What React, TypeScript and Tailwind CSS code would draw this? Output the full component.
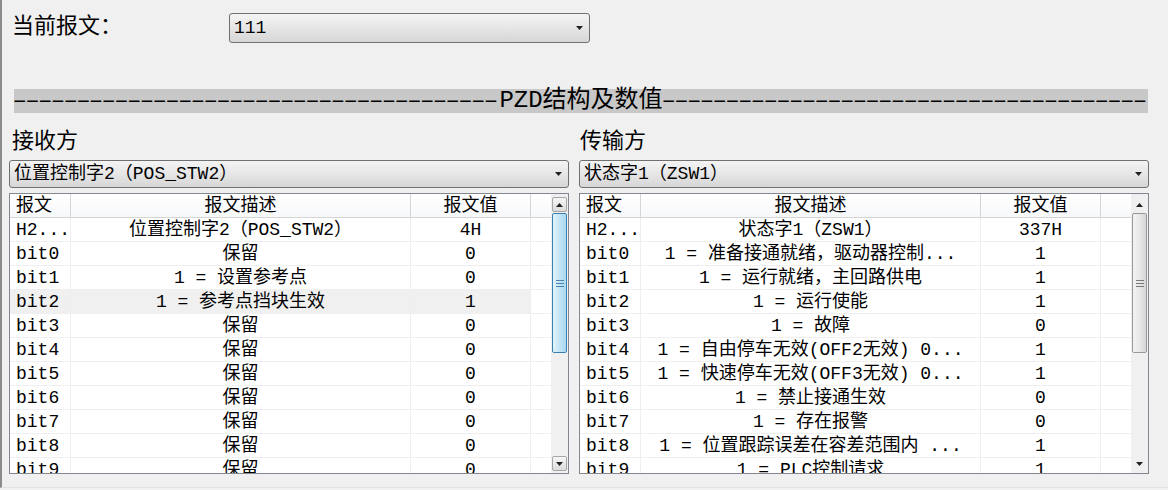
import React from "react";

type Row = { id: string; desc: string; value: string; hl?: boolean };

const recvRows: Row[] = [
  { id: "H2...", desc: "位置控制字2（POS_STW2）", value: "4H" },
  { id: "bit0", desc: "保留", value: "0" },
  { id: "bit1", desc: "1 = 设置参考点", value: "0" },
  { id: "bit2", desc: "1 = 参考点挡块生效", value: "1", hl: true },
  { id: "bit3", desc: "保留", value: "0" },
  { id: "bit4", desc: "保留", value: "0" },
  { id: "bit5", desc: "保留", value: "0" },
  { id: "bit6", desc: "保留", value: "0" },
  { id: "bit7", desc: "保留", value: "0" },
  { id: "bit8", desc: "保留", value: "0" },
  { id: "bit9", desc: "保留", value: "0" },
];

const sendRows: Row[] = [
  { id: "H2...", desc: "状态字1（ZSW1）", value: "337H" },
  { id: "bit0", desc: "1 = 准备接通就绪，驱动器控制...", value: "1" },
  { id: "bit1", desc: "1 = 运行就绪，主回路供电", value: "1" },
  { id: "bit2", desc: "1 = 运行使能", value: "1" },
  { id: "bit3", desc: "1 = 故障", value: "0" },
  { id: "bit4", desc: "1 = 自由停车无效(OFF2无效)  0...", value: "1" },
  { id: "bit5", desc: "1 = 快速停车无效(OFF3无效)  0...", value: "1" },
  { id: "bit6", desc: "1 = 禁止接通生效", value: "0" },
  { id: "bit7", desc: "1 = 存在报警", value: "0" },
  { id: "bit8", desc: "1 = 位置跟踪误差在容差范围内 ...", value: "1" },
  { id: "bit9", desc: "1 = PLC控制请求", value: "1" },
];

// 38 dashes each side fills the bar around the title
const DASHES = "─".repeat(38);

const Arrow = ({ up = false }: { up?: boolean }) => (
  <svg width="7" height="4" viewBox="0 0 7 4">
    <polygon points={up ? "0,4 3.5,0 7,4" : "0,0 7,0 3.5,4"} fill="#222" />
  </svg>
);

const Grip = ({ color }: { color: string }) => (
  <svg width="8" height="7" viewBox="0 0 8 7">
    <rect x="0" y="0" width="8" height="1" fill={color} />
    <rect x="0" y="3" width="8" height="1" fill={color} />
    <rect x="0" y="6" width="8" height="1" fill={color} />
  </svg>
);

const Combo = ({ text, className }: { text: string; className: string }) => (
  <div
    className={`flex items-center justify-between rounded-[3px] border border-[#707070] bg-gradient-to-b from-[#f4f4f4] via-[#e6e6e6] to-[#d6d6d6] pl-[4px] pr-[6px] text-[18px] leading-none text-black ${className}`}
  >
    <span className="whitespace-nowrap">{text}</span>
    <Arrow />
  </div>
);

const Scrollbar = ({ active }: { active: boolean }) => (
  <div className="flex w-[17px] flex-col items-center bg-[#f0f0f0] pt-[3px] pb-[2px]">
    <div
      className={`flex h-[15px] w-[15px] items-center justify-center ${
        active ? "rounded-[2px] border border-[#a7a7a7] bg-gradient-to-b from-[#f6f6f6] to-[#dcdcdc]" : ""
      }`}
    >
      <Arrow up />
    </div>
    <div
      className={`mt-[1px] flex h-[140px] w-[15px] items-center justify-center rounded-[2px] border ${
        active
          ? "border-[#3c7fb1] bg-gradient-to-r from-[#e3f4fc] via-[#c4e5f6] to-[#a9d9f2]"
          : "border-[#989898] bg-gradient-to-r from-[#f3f3f3] via-[#e8e8e8] to-[#d5d5d5]"
      }`}
    >
      <Grip color={active ? "#4d82b0" : "#7a7a7a"} />
    </div>
    <div className="flex-1" />
    <div
      className={`flex h-[15px] w-[15px] items-center justify-center ${
        active ? "rounded-[2px] border border-[#a7a7a7] bg-gradient-to-b from-[#f6f6f6] to-[#dcdcdc]" : ""
      }`}
    >
      <Arrow />
    </div>
  </div>
);

const DataTable = ({ rows, blank, active }: { rows: Row[]; blank: number; active: boolean }) => {
  const cols = blank === 20 ? "grid-cols-[61px_340px_120px_20px]" : "grid-cols-[61px_340px_120px_30px]";
  return (
    <div className="mt-[5px] flex h-[281px] border border-[#828790] bg-white">
      <div className="flex-1 overflow-hidden text-[18px] leading-[24px] text-black">
        <div className={`grid ${cols} h-[24px] border-b border-[#d5d5d5] bg-gradient-to-b from-white to-[#f7f8fa]`}>
          <div className="border-r border-[#d5d5d5] pl-[6px]">报文</div>
          <div className="border-r border-[#d5d5d5] text-center">报文描述</div>
          <div className="border-r border-[#d5d5d5] text-center">报文值</div>
          <div />
        </div>
        {rows.map((r) => (
          <div key={r.id} className={`grid ${cols} h-[24px] border-b border-[#efefef]`}>
            <div className={`border-r border-[#efefef] pl-[6px] whitespace-nowrap ${r.hl ? "bg-[#f0f0f0]" : ""}`}>{r.id}</div>
            <div className={`border-r border-[#efefef] text-center whitespace-nowrap overflow-hidden ${r.hl ? "bg-[#f0f0f0]" : ""}`}>
              {r.desc}
            </div>
            <div className={`border-r border-[#efefef] text-center ${r.hl ? "bg-[#f0f0f0]" : ""}`}>{r.value}</div>
            <div />
          </div>
        ))}
      </div>
      <Scrollbar active={active} />
    </div>
  );
};

export default function App() {
  return (
    <div className="h-[490px] w-[1168px] overflow-hidden bg-[#f0f0f0] font-['Liberation_Mono','Noto_Sans_CJK_SC',monospace] text-black">
      <div className="h-[488px] border-l-2 border-b border-l-[#8c8c8c] border-b-[#e2e2e2]">
        {/* current message */}
        <div className="flex items-center pt-[13px] pl-[10px]">
          <div className="w-[217px] text-[22px] leading-[30px]">当前报文：</div>
          <Combo text="111" className="h-[30px] w-[361px]" />
        </div>

        {/* section divider */}
        <div className="mt-[46px] ml-[12px] flex h-[24px] w-[1134px] items-center justify-center bg-[#c8c8c8]">
          <span className="whitespace-nowrap font-['DejaVu_Sans_Mono',monospace] text-[17px] leading-[24px] tracking-[2.5px]">
            {DASHES}
          </span>
          <span className="whitespace-nowrap px-[1px] text-[24px] leading-[24px]">PZD结构及数值</span>
          <span className="whitespace-nowrap font-['DejaVu_Sans_Mono',monospace] text-[17px] leading-[24px] tracking-[2.5px]">
            {DASHES}
          </span>
        </div>

        {/* receive / send panels */}
        <div className="mt-[17px] ml-[7px] grid grid-cols-[560px_570px] gap-[10px]">
          <div>
            <div className="h-[26px] pl-[3px] text-[22px] leading-[26px]">接收方</div>
            <Combo text="位置控制字2（POS_STW2）" className="mt-[4px] h-[28px]" />
            <DataTable rows={recvRows} blank={20} active />
          </div>
          <div>
            <div className="h-[26px] pl-[1px] text-[22px] leading-[26px]">传输方</div>
            <Combo text="状态字1（ZSW1）" className="mt-[4px] h-[28px]" />
            <DataTable rows={sendRows} blank={30} active={false} />
          </div>
        </div>
      </div>
    </div>
  );
}
